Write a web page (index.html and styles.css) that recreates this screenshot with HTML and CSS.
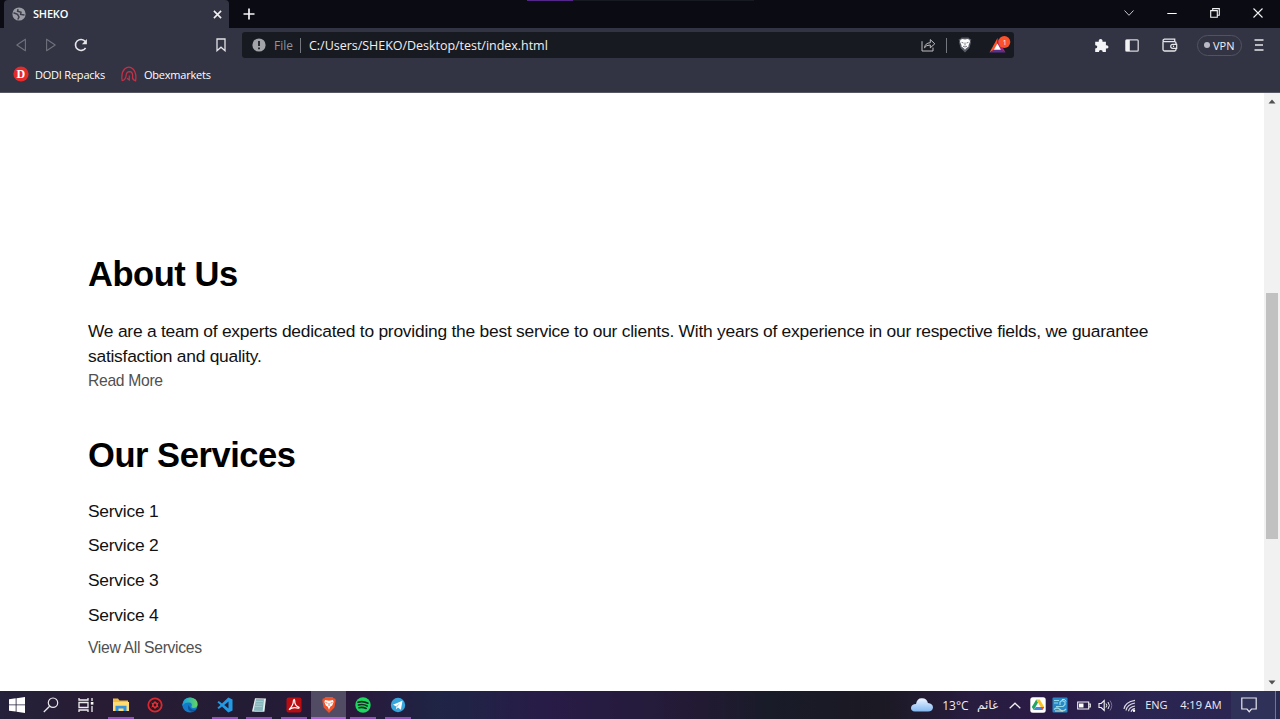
FILE: index.html
```html
<!DOCTYPE html>
<html lang="en">
<head>
<meta charset="utf-8">
<title>SHEKO</title>
<link rel="stylesheet" href="styles.css">
</head>
<body>
<div class="screen">
  <header class="titlebar">
    <div class="tab">
      <svg class="globe" viewBox="0 0 14 14"><circle cx="7" cy="7" r="6.6" fill="#9b9ca4"/><path d="M1.500 5.800 5.500 7.300 7 10 5.800 12.500M6 2.200 5.600 4.300 9 5.300 8.600 7.400 12.500 8" fill="none" stroke="#3b3d4b" stroke-width="1.500"/></svg>
      <span class="tab-name">SHEKO</span>
      <svg class="tab-close" viewBox="0 0 8 8"><path d="M.8.8 7.2 7.2M7.2.8.8 7.2" stroke="#f0f0f3" stroke-width="1.4"/></svg>
    </div>
    <svg class="new-tab" viewBox="0 0 12 12"><path d="M6 .5v11M.5 6h11" stroke="#f5f5f7" stroke-width="1.7"/></svg>
    <div class="accent"></div>
    <svg class="win chevron" viewBox="0 0 10 6"><path d="m.5.5 4.5 4.8L9.500.5" fill="none" stroke="#c7c7cc"/></svg>
    <svg class="win minimize" viewBox="0 0 10 10"><path d="M.3 5.500h9.400" stroke="#fff"/></svg>
    <svg class="win restore" viewBox="0 0 10 10"><path d="M.7 2.600h6.600v6.700H.7zM2.700 2.500V.6h6.600v6.700h-2" fill="none" stroke="#f2f2f4" stroke-width="1.1"/></svg>
    <svg class="win close" viewBox="0 0 10 10"><path d="m.5.5 9 9m0-9-9 9" stroke="#f2f2f4" stroke-width="1.1"/></svg>
  </header>

  <nav class="toolbar">
    <svg class="back" viewBox="0 0 10 14"><path d="M9.400 1.200v11.600L.8 7z" fill="none" stroke="#6f717c" stroke-width="1.1" stroke-linejoin="round"/></svg>
    <svg class="forward" viewBox="0 0 10 14"><path d="M.6 1.200v11.600L9.200 7z" fill="none" stroke="#6f717c" stroke-width="1.1" stroke-linejoin="round"/></svg>
    <svg class="reload" viewBox="0 0 14 14"><path d="M11.600 10A5.500 5.500 0 1 1 11.300 3.500" fill="none" stroke="#e6e6ea" stroke-width="1.600"/><path d="M12.900 1v5.200H7.900z" fill="#e6e6ea"/></svg>
    <svg class="bookmark" viewBox="0 0 10 14"><path d="M1 1h8v11.700L5 9.200l-4 3.500z" fill="none" stroke="#e2e2e7" stroke-width="1.300"/></svg>
    <div class="address">
      <svg class="info" viewBox="0 0 14 14"><circle cx="7" cy="7" r="6.600" fill="#a3a4aa"/><path d="M7 3v5M7 9.400v1.800" stroke="#181a21" stroke-width="1.700"/></svg>
      <span class="scheme">File</span>
      <span class="divider"></span>
      <span class="path">C:/Users/SHEKO/Desktop/test/index.html</span>
      <svg class="share" viewBox="0 0 15 14"><path d="M1 3.200V13h11V9.600M3.500 9.800Q4 5.100 9.300 4.700V1.600l4.500 4.200-4.500 4V7Q5.200 6.800 3.500 9.800z" fill="none" stroke="#bcbdc2" stroke-width="1"/></svg>
      <span class="divider"></span>
      <svg class="brave" viewBox="0 0 14 16"><path d="m3.500.5 7 0 1.500 1.700 1.300-.1-.6 2.300.3 1L11.400 11 7 15.500 2.600 11 1 5.400l.3-1-.6-2.300 1.300.1z" fill="#595b65"/><path d="m2.500 2.700 2-.6L7 2.600l2.500-.5 2 .6.500 2.100-1.500 3.400.1 1.400-3 2.200-.6 1.200-.6-1.200-3-2.200.1-1.400L2 4.800z" fill="#fff"/><path d="m3.500 5.300 2 .7m3 0 2-.7M7 5.500v3M5 9.200l2 .8 2-.8" stroke="#555762" stroke-width=".8" fill="none"/></svg>
      <svg class="bat" viewBox="0 0 23 18"><path d="M9.500 2 1.500 16.500 9.500 12z" fill="#ff542d"/><path d="m9.500 2 8 14.500-8-4.500z" fill="#a32678"/><path d="M1.500 16.500h16l-8-5z" fill="#5b318d"/><path d="m9.400 7.500 3.500 6.300h-7z" fill="#fff"/><circle cx="16.300" cy="6" r="6" fill="#fa522b"/><text x="14.700" y="8.500" class="badge">1</text></svg>
    </div>
    <svg class="puzzle" viewBox="0 0 15 15"><path d="M1.200 3.800h3.600Q4.400 1 6.600 1t1.900 2.800h3.400v3.400q2.600-.2 2.600 1.700t-2.600 1.700V14H8.700q0-2.100-1.900-2.100T4.900 14H1.200v-3.500q2.100 0 2.100-1.700T1.200 7.200z" fill="#f5f5f7"/></svg>
    <svg class="sidebar" viewBox="0 0 14 13"><rect x=".8" y=".8" width="12.400" height="11.400" rx="1" fill="none" stroke="#d6d6dc" stroke-width="1.300"/><path d="M1 1h3.800v11H1z" fill="#f2f2f4"/></svg>
    <svg class="wallet" viewBox="0 0 16 14"><path d="M1 3.500V11.500Q1 13 2.500 13H12.500Q14 13 14 11.500V5Q14 3.600 12.500 3.600H2.500Q1 3.500 1 2.600T2.500 1.200H12.700V3.500" fill="none" stroke="#e6e6ea" stroke-width="1.300"/><path d="M14.700 6.300h-4a2 2 0 0 0 0 4h4z" fill="#323443" stroke="#e6e6ea" stroke-width="1.200"/><circle cx="11.500" cy="8.300" r=".7" fill="#fff"/></svg>
    <div class="vpn"><i></i><span>VPN</span></div>
    <svg class="menu" viewBox="0 0 10 12"><path d="M.5 1h9M1 6h8M.5 11h9" stroke="#e6e6ea" stroke-width="1.400"/></svg>
  </nav>

  <div class="bookmarks">
    <svg class="dodi" viewBox="0 0 16 16"><circle cx="8" cy="8" r="7.600" fill="#e52a2c"/><text x="3.600" y="12.200" class="dodi-letter">D</text></svg>
    <span class="bm-one">DODI Repacks</span>
    <svg class="obex" viewBox="0 0 16 16"><path d="M1.200 14.800Q-.2 7 3.600 3Q8-.7 12 3Q15.800 7 14.600 14.800Q10.800 13.800 11.700 10Q11.600 5.700 8.600 5.600Q5.600 5.700 5.200 9Q5 13.500 1.200 14.800M8.300 9.600V14L6 12.300" fill="none" stroke="#c92f46" stroke-width="1.200"/></svg>
    <span class="bm-two">Obexmarkets</span>
  </div>

  <div class="viewport">
    <main class="page">
      <section class="about">
        <h1>About Us</h1>
        <p>We are a team of experts dedicated to providing the best service to our clients. With years of experience in our respective fields, we guarantee<br>satisfaction and quality.</p>
        <a>Read More</a>
      </section>
      <section class="services">
        <h1>Our Services</h1>
        <ul><li>Service 1</li><li>Service 2</li><li>Service 3</li><li>Service 4</li></ul>
        <a>View All Services</a>
      </section>
    </main>
    <div class="scrollbar">
      <svg viewBox="0 0 8 5"><path d="m.5 4.500 3.500-4 3.500 4z" fill="#505050"/></svg>
      <div class="thumb"></div>
      <svg viewBox="0 0 8 5"><path d="M.5.5h7L4 4.500z" fill="#505050"/></svg>
    </div>
  </div>

  <footer class="taskbar">
    <div class="task start"><svg viewBox="0 0 16 16"><path d="m0 2.200 6.700-.9v6.200H0zM7.500 1.200 16 0v7.500H7.500zM0 8.300h6.700v6.300L0 13.700zM7.500 8.300H16V16l-8.500-1.200z" fill="#fff"/></svg></div>
    <div class="task search"><svg viewBox="0 0 16 16"><circle cx="10" cy="5.700" r="4.700" fill="none" stroke="#e9e8ed" stroke-width="1.200"/><path d="M6.600 9.200.8 15" stroke="#e9e8ed" stroke-width="1.300"/></svg></div>
    <div class="task view"><svg viewBox="0 0 16 16"><path d="M1 1v2h9V1M1 15v-2h9v2M1 5.500h9v5H1zM14 1v3m0 5v6" fill="none" stroke="#eee" stroke-width="1.300"/><path d="M12.800 5h2.600v2.600h-2.600z" fill="#fff"/></svg></div>
    <div class="task open"><svg viewBox="0 0 16 16"><path d="M0 1.500h5l1.500 2H15V14H0z" fill="#f1bd42"/><path d="M0 5h16v9H0z" fill="#ffdc72"/><path d="M2.500 14V8.800h11V14h-3v-2.500h-5V14z" fill="#3493dc"/></svg></div>
    <div class="task"><svg viewBox="0 0 16 16"><circle cx="8" cy="8" r="6.700" fill="#281821" stroke="#d92832" stroke-width="1.800"/><circle cx="8" cy="8" r="2.300" fill="none" stroke="#ec3039" stroke-width="1.300"/><path d="M8 4v8M4.500 6l7 4m0-4-7 4" stroke="#ec3039"/><circle cx="8" cy="8" r="1.200" fill="#281821"/></svg></div>
    <div class="task"><svg viewBox="0 0 16 16"><defs><linearGradient id="edge"><stop stop-color="#159fe7"/><stop offset="1" stop-color="#66d75a"/></linearGradient></defs><circle cx="8" cy="8" r="7.600" fill="#127ac9"/><path d="M.4 7.500Q1.300.5 8.400.5 15.500 1 15.600 7.500q-.5 3.500-4.300 3.500-2.900-.3-1.600-2 .8-3-2.700-3.400Q2.500 5.500.4 9z" fill="url(#edge)"/><path d="M6.700 8q-2.400 5 3 6.700 3 .1 4.600-2.300-5.700 1.700-7.600-4.400" fill="#0d5299"/></svg></div>
    <div class="task open"><svg viewBox="0 0 16 16"><path d="m11.300.5 4.200 2v11l-4.200 2L5 9.600 1.800 12 .4 10.800 3.500 8 .4 5.200 1.800 4 5 6.400zm.2 4L7.200 8l4.300 3.500z" fill="#229be4" fill-rule="evenodd"/></svg></div>
    <div class="task open"><svg viewBox="0 0 16 16"><path d="m4 1.200 11 .2-1.600 13.400L1 14.600z" fill="#e4eeee"/><path d="m5 2 8 .2-1.300 11.800-9-.2z" fill="#87b7bd"/><path d="M5 4.500h7M4.700 7h7M4 9.500h7.100" stroke="#b4d5d8" stroke-width=".7"/></svg></div>
    <div class="task open"><svg viewBox="0 0 16 16"><rect x=".5" y=".5" width="15" height="15" rx="2" fill="#b90d12"/><path d="M3 12.700Q7.500 8.500 7.400 3.600q1-2.500 1.300 0Q8.500 9 13 10.300q.5 1.100-1 .9-5-1.500-9 1.500z" fill="none" stroke="#fff" stroke-width="1.200"/></svg></div>
    <div class="task open active"><svg viewBox="0 0 16 16"><path d="M4.500 0h7l1.400 1.600 1.300-.1.500 2-1.300 7L8 16l-5.400-5.500-1.300-7 .5-2 1.300.1z" fill="#f45228"/><path d="m4 3 4 .8 4-.8.600 2-1.400 3.600-2 1.200L8 12.700 6.800 9.800l-2-1.200L3.400 5z" fill="#fff"/><path d="m4.500 5.500 2 .7m3 0 2-.7M8 6v3" stroke="#f45228" stroke-width=".8"/></svg></div>
    <div class="task open"><svg viewBox="0 0 16 16"><circle cx="8" cy="8" r="7.700" fill="#1ed760"/><path d="M3 5.200q5-1.600 10 1M3.500 8q4.500-1.300 8.700 1M4 10.700q3.500-1 7.200.8" fill="none" stroke="#142c22" stroke-width="1.600" stroke-linecap="round"/></svg></div>
    <div class="task open"><svg viewBox="0 0 16 16"><circle cx="8" cy="8" r="7.200" fill="#36a6dc"/><path d="m3 7.800 9.500-4-1.600 8.900-3-2.300-1.600 1.800-.4-3z" fill="#fff"/><path d="m6 9 4.500-3-3.200 3.800-.8 1.300" fill="#a8cddd"/></svg></div>

    <svg class="cloud" viewBox="0 0 24 16"><defs><linearGradient id="cloud" x2="0" y2="1"><stop stop-color="#eef5ff"/><stop offset="1" stop-color="#82b8f3"/></linearGradient></defs><path d="M5 14.500Q.7 14 1 10.700 1.600 7 6 7 7 1 12 1.200q5 .1 5.900 4.700Q23 6.500 23 10.500q-.4 4-5 4z" fill="url(#cloud)"/></svg>
    <span class="temperature">13°C</span><span class="weather" lang="ar" dir="rtl">غائم</span>
    <svg class="tray-up" viewBox="0 0 12 7"><path d="m.7 6.200 5.300-5 5.300 5" fill="none" stroke="#f3f1f5" stroke-width="1.300"/></svg>
    <svg class="drive" viewBox="0 0 16 16"><rect x=".3" y=".3" width="15.400" height="15.400" rx="2.500" fill="#fff"/><path d="M6.300 2.500 1.800 10l2 3L8 5.600z" fill="#21a663"/><path d="M6.300 2.500h3.500l4.400 7.600h-3.500z" fill="#fbc226"/><path d="M5.800 10h8.400l-1.900 3H3.800z" fill="#4285e8"/><path d="m12.500 10 1.700.1-1.900 2.900-1.700-3z" fill="#e94c3e"/></svg>
    <svg class="control" viewBox="0 0 16 16"><rect x=".5" y=".5" width="15" height="15" rx="1" fill="#2989c8"/><path d="M2 3.500h5M2 6h4M2 12.500q3-3 6 0t6-.5M4 9.500h7l2-2V5L10 3.500 8 5v3" fill="none" stroke="#94d9e8" stroke-width="1.200"/><path d="M10 2.500q3-1 4 2M3 14h8" stroke="#e8dda8" fill="none"/></svg>
    <svg class="battery" viewBox="0 0 14 9"><path d="M.7 1h11v7H.7zM12 3h1.300v3H12" fill="none" stroke="#f3f1f5" stroke-width="1.100"/><path d="M2 2.500h4.500v4H2z" fill="#fff"/></svg>
    <svg class="sound" viewBox="0 0 15 13"><path d="M1 4.500h2.200L6.200 1.500v10l-3-3H1z" fill="none" stroke="#f3f1f5" stroke-width="1.100"/><path d="M8 4.500q1.500 2 0 4M10 3q2.800 3.500 0 7" fill="none" stroke="#e8e6ef"/><path d="M12 1.500q3.500 5 0 10" fill="none" stroke="#77718d"/></svg>
    <svg class="wifi" viewBox="0 0 13 13"><g fill="none" stroke="#dcd8e5" stroke-width="1.200"><path d="M1 10Q2 3 12 1.300M3 11.500Q4 5.500 12 4M5.500 12.300Q6 8 12 7M8 12.800Q9 10 12 9.700"/></g><circle cx="11" cy="11.700" r="1.200" fill="#fff"/></svg>
    <span class="language">ENG</span><time>4:19 AM</time>
    <div class="notify"><svg viewBox="0 0 16 16"><path d="M.8 1h14.400v11H10.500L8.200 14.700 6 12H.8z" fill="none" stroke="#e8e6ef" stroke-width="1.200"/></svg></div>
  </footer>
</div>
</body>
</html>
```
FILE: styles.css
```css
*{box-sizing:border-box}
body{margin:0;overflow:hidden;background:#fff;font-family:"Open Sans","Noto Sans",sans-serif}
svg{display:block;flex:none}
span,time{white-space:nowrap}
.screen{width:1280px;height:719px;display:flex;flex-direction:column}
.titlebar{height:28px;background:#0b0b14;display:flex;align-items:center;padding-left:4px;flex:none}
.tab{width:225px;height:28px;background:#323443;border-radius:4px 4px 0 0;display:flex;align-items:center;padding-left:8px;color:#fff;flex:none}
.globe{width:14px;height:14px}
.tab-name{font-size:11px;line-height:16px;font-weight:600;letter-spacing:-.2px;margin-left:7px;width:176px}
.tab-close{width:9px;height:9px;margin-left:4px}
.new-tab{width:12px;height:12px;margin-left:14px}
.accent{width:227px;height:1px;margin-left:272px;align-self:flex-start;background:linear-gradient(90deg,#55268a 46px,#181a21 46px);flex:none}
.win{width:10px;height:10px;margin-top:-2px}
.chevron{height:6px;margin-left:370px}
.minimize{margin-left:33px}.restore{margin-left:33px}.close{margin-left:33px}
.toolbar{height:34px;background:#323443;display:flex;align-items:center;padding-left:16px;flex:none}
.back{width:10px;height:14px}.forward{width:10px;height:14px;margin-left:20px}.reload{width:14px;height:14px;margin-left:18px}.bookmark{width:10px;height:14px;margin-left:128px}
.address{width:772px;height:26px;margin-left:16px;background:#181a21;border-radius:3px;display:flex;align-items:center;flex:none;font-size:12px}
.info{width:14px;height:14px;margin-left:10px}.scheme{color:#92949b;margin-left:8px;width:21px}.divider{width:1px;height:15px;background:#747680;margin-left:5px;flex:none}
.path{color:#f0f0f2;margin-left:8px;width:612px;font-size:12.500px;letter-spacing:-.03px}
.share{width:15px;height:14px}.share+.divider{margin-left:10px}.brave{width:14px;height:16px;margin-left:11px}.bat{width:23px;height:18px;margin-left:16px}
.badge{font:7px "Open Sans",sans-serif;fill:#fff}
.puzzle{width:15px;height:15px;margin-left:80px}.sidebar{width:14px;height:13px;margin-left:16px}.wallet{width:16px;height:14px;margin-left:23px}
.vpn{width:45px;height:21px;border:1px solid #515361;border-radius:11px;margin-left:19px;display:flex;align-items:center;padding-left:6px;color:#f0f0f4;font-size:11px;flex:none}.vpn i{width:6px;height:6px;border-radius:50%;background:#b9bac6;margin-right:3px}
.menu{width:10px;height:12px;margin-left:12px}
.bookmarks{height:31px;background:#323443;border-bottom:1px solid #555762;display:flex;align-items:center;padding:0 0 6px 13px;font-size:11px;letter-spacing:-.22px;color:#fff;flex:none}
.dodi{width:16px;height:16px}.dodi-letter{font:bold 12px "Liberation Serif",serif;fill:#fff}.bm-one{width:71px;margin-left:6px}.obex{width:16px;height:16px;margin-left:15px}.bm-two{margin-left:7px}
.viewport{height:598px;display:flex;flex:none}
.page{width:1264px;padding:158px 88px 0;font-family:"Liberation Sans",Arial,sans-serif;color:#111}
h1{margin:0;color:#000;font-size:34.500px;line-height:46px;letter-spacing:-.45px}
p{margin:22px 0 0;font-size:17.400px;letter-spacing:-.235px;line-height:25.300px;white-space:nowrap}
a{display:block;color:#505050;font-size:15.700px;letter-spacing:-.32px;line-height:24px;margin-top:-1px}
.services{margin-top:39px}
ul{list-style:none;margin:21px 0 0;padding:0}
li{font-size:17.400px;letter-spacing:-.235px;line-height:25.300px;margin-bottom:9.370px}
.scrollbar{width:16px;background:#f1f1f1;display:flex;flex-direction:column;align-items:center;padding:6px 0}
.scrollbar svg{width:8px;height:5px}.thumb{width:12px;height:246px;background:#c1c1c1;margin:189px 0 141px}
.taskbar{height:28px;display:flex;align-items:center;color:#eeeaf3;background:linear-gradient(90deg,#24213a 0,#281c34 90px,#231c35 260px,#29183a 345px,#202344 430px,#1f2446 450px,#281b47 550px,#251b3b 650px,#221a33 700px,#181b28 770px,#1b1923 880px,#281c3f 970px,#2a1b47 1060px,#2b2450 1130px,#2a2651 1230px,#292b51 1280px);font-size:11px;flex:none}
.task{width:34.700px;height:28px;display:flex;align-items:center;justify-content:center;flex:none}.task svg{width:16px;height:16px}.start{width:34px}.search{width:34px}.view{width:35.300px}.open{background:linear-gradient(#9152b4,#9152b4) center bottom/26px 2px no-repeat}.open.active{background:linear-gradient(#b064d2,#b064d2) center bottom/100% 2px no-repeat,#514b63}
.cloud{width:24px;height:16px;margin-left:494.700px}.temperature{font-size:12px;margin-left:8px;width:27px}.weather{font-family:"DejaVu Sans",sans-serif;font-size:12px;margin-left:5px;width:24px}
.tray-up{width:12px;height:7px;margin-left:11px}.drive{width:16px;height:16px;margin-left:9px}.control{width:16px;height:16px;margin-left:6px}.battery{width:14px;height:9px;margin-left:9px}.sound{width:15px;height:13px;margin-left:7px}.wifi{width:13px;height:13px;margin-left:10px}.language{margin-left:9px;width:23px}time{margin-left:12px;width:42px}
.language,time{position:relative;top:-1px}
.notify{width:45px;height:28px;margin-left:9px;display:flex;align-items:center;padding-left:10px;background:#303158;border-right:1px solid #757391;flex:none}.notify svg{width:16px;height:16px}
```
